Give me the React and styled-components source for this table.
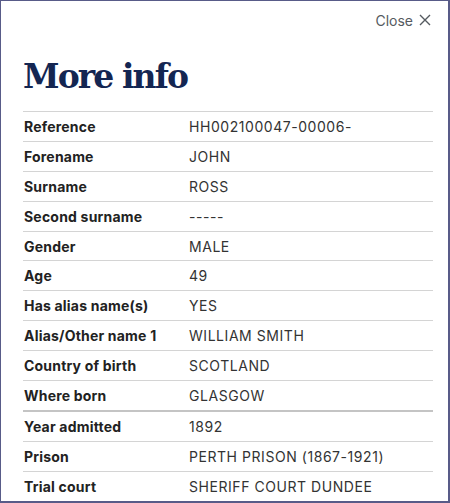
import React from 'react';
import styled, { createGlobalStyle } from 'styled-components';

const GlobalStyle = createGlobalStyle`
  html, body {
    margin: 0;
    padding: 0;
    background: #ffffff;
  }
`;

// Moldura do painel

const Painel = styled.div`
  box-sizing: border-box;
  width: 450px;
  height: 503px;
  overflow: hidden;
  border-style: solid;
  border-color: #585b88;
  border-width: 1px 2px 2px 1px;
  padding: 0 15px 0 22px;
  background: #fff;
  font-family: Inter, "Noto Sans", sans-serif;
`;

// Barra superior com o botão fechar

const Topo = styled.div`
  display: flex;
  justify-content: flex-end;
  padding: 9px 2px 0 0;
  height: 20px;
`;

const BotaoFechar = styled.button`
  display: flex;
  align-items: center;
  gap: 6px;
  border: none;
  background: none;
  padding: 0;
  font-family: inherit;
  font-size: 14px;
  color: #555a60;
  cursor: pointer;
  svg {
    display: block;
  }
`;

const Titulo = styled.h2`
  margin: 27px 0 14px 0;
  font-family: "DejaVu Serif", "Liberation Serif", serif;
  font-weight: 700;
  font-size: 33px;
  letter-spacing: -1.9px;
  line-height: 40px;
  color: #142652;
`;

// Tabela de dados

const Tabela = styled.div`
  border-top: 1px solid #d4d4d4;
`;

const Linha = styled.div`
  display: grid;
  grid-template-columns: 166px 1fr;
  align-items: center;
  height: 28.9px;
  border-bottom: ${(props) => (props.forte ? '2px solid #c4c4c4' : '1px solid #d4d4d4')};
  font-size: 14px;
`;

const Rotulo = styled.span`
  font-weight: 700;
  color: #222;
  padding-left: 1px;
  letter-spacing: 0.2px;
`;

const Valor = styled.span`
  color: #333;
  letter-spacing: 0.55px;
`;

const dados = [
  ['Reference', 'HH002100047-00006-'],
  ['Forename', 'JOHN'],
  ['Surname', 'ROSS'],
  ['Second surname', '-----'],
  ['Gender', 'MALE'],
  ['Age', '49'],
  ['Has alias name(s)', 'YES'],
  ['Alias/Other name 1', 'WILLIAM SMITH'],
  ['Country of birth', 'SCOTLAND'],
  ['Where born', 'GLASGOW'],
  ['Year admitted', '1892'],
  ['Prison', 'PERTH PRISON (1867-1921)'],
  ['Trial court', 'SHERIFF COURT DUNDEE'],
];

const App = () => {
  return (
    <Painel>
      <GlobalStyle />
      <Topo>
        <BotaoFechar>
          Close
          <svg width="12" height="12" viewBox="0 0 12 12">
            <path d="M1 1 L11 11 M11 1 L1 11" stroke="#555a60" strokeWidth="1.4" fill="none" />
          </svg>
        </BotaoFechar>
      </Topo>
      <Titulo>More info</Titulo>
      <Tabela>
        {dados.map(([rotulo, valor], index) => (
          <Linha key={index} forte={rotulo === 'Where born'}>
            <Rotulo>{rotulo}</Rotulo>
            <Valor>{valor}</Valor>
          </Linha>
        ))}
      </Tabela>
    </Painel>
  );
};

export default App;
